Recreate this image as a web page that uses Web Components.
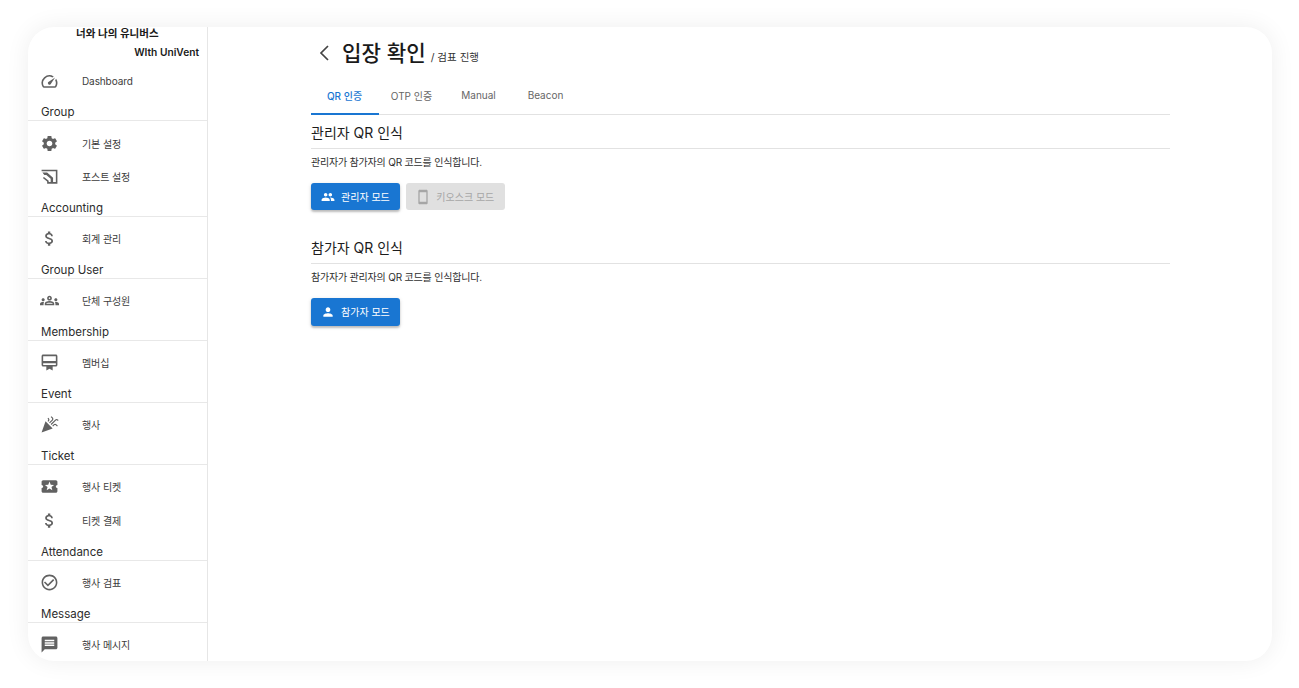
<!DOCTYPE html>
<html lang="ko">
<head>
<meta charset="utf-8">
<title>입장 확인</title>
<style>
  html, body { margin: 0; height: 100%; background: #fff; }
  body { font-family: Inter, "Noto Sans CJK KR", sans-serif; overflow: hidden; }
</style>
</head>
<body>
<app-shell>
  <side-nav slot="side"></side-nav>
  <checkin-page slot="main"></checkin-page>
</app-shell>

<script>
const ICONS = {
  speed: "M20.38 8.57l-1.23 1.85a8 8 0 0 1-.22 7.58H5.07A8 8 0 0 1 15.58 6.85l1.85-1.23A10 10 0 0 0 3.35 19a2 2 0 0 0 1.72 1h13.85a2 2 0 0 0 1.74-1 10 10 0 0 0-.27-10.44zm-9.79 6.84a2 2 0 0 0 2.83 0l5.66-8.49-8.49 5.66a2 2 0 0 0 0 2.83z",
  settings: "M19.14 12.94c.04-.3.06-.61.06-.94 0-.32-.02-.64-.07-.94l2.03-1.58c.18-.14.23-.41.12-.61l-1.92-3.32c-.12-.22-.37-.29-.59-.22l-2.39.96c-.5-.38-1.03-.7-1.62-.94l-.36-2.54c-.04-.24-.24-.41-.48-.41h-3.84c-.24 0-.43.17-.47.41l-.36 2.54c-.59.24-1.13.57-1.62.94l-2.39-.96c-.22-.08-.47 0-.59.22L2.74 8.87c-.12.21-.08.47.12.61l2.03 1.58c-.05.3-.09.63-.09.94s.02.64.07.94l-2.03 1.58c-.18.14-.23.41-.12.61l1.92 3.32c.12.22.37.29.59.22l2.39-.96c.5.38 1.03.7 1.62.94l.36 2.54c.05.24.24.41.48.41h3.84c.24 0 .44-.17.47-.41l.36-2.54c.59-.24 1.13-.56 1.62-.94l2.39.96c.22.08.47 0 .59-.22l1.92-3.32c.12-.22.07-.47-.12-.61l-2.01-1.58zM12 15.6c-1.98 0-3.6-1.62-3.6-3.6s1.62-3.6 3.6-3.6 3.6 1.62 3.6 3.6-1.62 3.6-3.6 3.6z",
  post: "M2 3.5h20V21H10v-2h10V5.5H2zM3 7h6l7.5 6.5V19h-3v-4.2L8 10H5.5zM5 12.5l6 5V21H9v-2.6l-5.4-4.5z",
  money: "M11.8 10.9c-2.27-.59-3-1.2-3-2.15 0-1.09 1.01-1.85 2.7-1.85 1.78 0 2.44.85 2.5 2.1h2.21c-.07-1.72-1.12-3.3-3.21-3.81V3h-3v2.16c-1.94.42-3.5 1.68-3.5 3.61 0 2.31 1.91 3.46 4.7 4.13 2.5.6 3 1.48 3 2.41 0 .69-.49 1.79-2.7 1.79-2.06 0-2.87-.92-2.98-2.1h-2.2c.12 2.19 1.76 3.42 3.68 3.83V21h3v-2.15c1.95-.37 3.5-1.5 3.5-3.55 0-2.84-2.43-3.81-4.7-4.4z",
  groups: "M4 13c1.1 0 2-.9 2-2s-.9-2-2-2-2 .9-2 2 .9 2 2 2zm1.13 1.1c-.37-.06-.74-.1-1.13-.1-.99 0-1.93.21-2.78.58C.48 14.9 0 15.62 0 16.43V18h4.5v-1.61c0-.83.23-1.61.63-2.29zM20 13c1.1 0 2-.9 2-2s-.9-2-2-2-2 .9-2 2 .9 2 2 2zm4 3.43c0-.81-.48-1.53-1.22-1.85-.85-.37-1.79-.58-2.78-.58-.39 0-.76.04-1.13.1.4.68.63 1.46.63 2.29V18H24v-1.57zm-7.76-2.78c-1.17-.52-2.61-.9-4.24-.9-1.63 0-3.07.39-4.24.9C6.68 14.13 6 15.21 6 16.39V18h12v-1.61c0-1.18-.68-2.26-1.76-2.74zM8 16c.09-.23.13-.39.91-.69.97-.38 1.99-.56 3.09-.56s2.12.18 3.09.56c.77.3.81.46.91.69H8zM12 12c1.66 0 3-1.34 3-3s-1.34-3-3-3-3 1.34-3 3 1.34 3 3 3zm0-4c.55 0 1 .45 1 1s-.45 1-1 1-1-.45-1-1 .45-1 1-1z",
  member: "M20 2H4c-1.11 0-2 .89-2 2v11c0 1.11.89 2 2 2h4v5l4-2 4 2v-5h4c1.11 0 2-.89 2-2V4c0-1.11-.89-2-2-2zm0 13H4v-2h16v2zm0-5H4V4h16v6z",
  party: "M2 22l14-5-9-9zM14.53 12.53l5.59-5.59c.49-.49 1.28-.49 1.77 0l.59.59 1.06-1.06-.59-.59c-1.07-1.07-2.82-1.07-3.89 0l-5.59 5.59 1.06 1.06zM10.06 6.88l-.59.59 1.06 1.06.59-.59c1.07-1.07 1.07-2.82 0-3.89l-.59-.59-1.06 1.06.59.59c.48.48.48 1.28 0 1.77zM17.06 11.88l-1.59 1.59 1.06 1.06 1.59-1.59c.49-.49 1.28-.49 1.77 0l1.61 1.61 1.06-1.06-1.61-1.61c-1.08-1.07-2.82-1.07-3.89 0zM15.06 5.88l-3.59 3.59 1.06 1.06 3.59-3.59c1.07-1.07 1.07-2.82 0-3.89l-1.59-1.59-1.06 1.06 1.59 1.59c.48.49.48 1.29 0 1.77z",
  ticket: "M20 12c0-1.1.9-2 2-2V6c0-1.1-.9-2-2-2H4c-1.1 0-1.99.9-1.99 2v4c1.1 0 1.99.9 1.99 2s-.89 2-2 2v4c0 1.1.9 2 2 2h16c1.1 0 2-.9 2-2v-4c-1.1 0-2-.9-2-2zm-4.42 4.8L12 14.5l-3.58 2.3 1.08-4.12-3.29-2.69 4.24-.25L12 5.8l1.54 3.95 4.24.25-3.29 2.69 1.09 4.11z",
  check: "M16.59 7.58L10 14.17l-3.59-3.58L5 12l5 5 8-8zM12 2C6.48 2 2 6.48 2 12s4.48 10 10 10 10-4.48 10-10S17.52 2 12 2zm0 18c-4.42 0-8-3.58-8-8s3.58-8 8-8 8 3.58 8 8-3.58 8-8 8z",
  message: "M20 2H4c-1.1 0-1.99.9-1.99 2L2 22l4-4h14c1.1 0 2-.9 2-2V4c0-1.1-.9-2-2-2zm-2 12H6v-2h12v2zm0-3H6V9h12v2zm0-3H6V6h12v2z",
  people: "M16 11c1.66 0 2.99-1.34 2.99-3S17.66 5 16 5c-1.66 0-3 1.34-3 3s1.34 3 3 3zm-8 0c1.66 0 2.99-1.34 2.99-3S9.66 5 8 5C6.34 5 5 6.34 5 8s1.34 3 3 3zm0 2c-2.33 0-7 1.17-7 3.5V19h14v-2.5c0-2.33-4.67-3.5-7-3.5zm8 0c-.29 0-.62.02-.97.05 1.16.84 1.97 1.97 1.97 3.45V19h6v-2.5c0-2.33-4.67-3.5-7-3.5z",
  person: "M12 12c2.21 0 4-1.79 4-4s-1.79-4-4-4-4 1.79-4 4 1.79 4 4 4zm0 2c-2.67 0-8 1.34-8 4v2h16v-2c0-2.66-5.33-4-8-4z",
  phone: "M17 1.01L7 1c-1.1 0-2 .9-2 2v18c0 1.1.9 2 2 2h10c1.1 0 2-.9 2-2V3c0-1.1-.9-1.99-2-1.99zM17 19H7V5h10v14z"
};

function iconSvg(name, size) {
  return `<svg class="i-${name}" width="${size}" height="${size}" viewBox="0 0 24 24" fill="currentColor" aria-hidden="true"><path d="${ICONS[name]}"/></svg>`;
}

class AppShell extends HTMLElement {
  constructor() {
    super();
    this.attachShadow({ mode: "open" }).innerHTML = `
      <style>
        :host { display: block; box-sizing: border-box; height: 688px; padding: 27px 27px 27px 28px; }
        .card {
          display: flex; height: 634px; background: #fff; border-radius: 26px; overflow: hidden;
          box-shadow: 0 0 24px rgba(0, 0, 0, 0.07);
        }
        ::slotted([slot="side"]) { flex: 0 0 180px; }
        ::slotted([slot="main"]) { flex: 1; min-width: 0; }
      </style>
      <div class="card">
        <slot name="side"></slot>
        <slot name="main"></slot>
      </div>
    `;
  }
}

class NavItem extends HTMLElement {
  constructor() {
    super();
    const icon = this.getAttribute("icon");
    this.attachShadow({ mode: "open" }).innerHTML = `
      <style>
        :host { display: flex; align-items: center; height: 33.5px; color: #3c3c3c; }
        .icon { flex: 0 0 42px; display: flex; justify-content: center; color: #616161; margin-right: 12px; }
        .label { font-size: 10px; letter-spacing: -0.1px; }
      </style>
      <span class="icon">${iconSvg(icon, 19)}</span>
      <span class="label"><slot></slot></span>
    `;
  }
}

class NavGroup extends HTMLElement {
  constructor() {
    super();
    this.attachShadow({ mode: "open" }).innerHTML = `
      <style>
        :host { display: block; }
        .title {
          box-sizing: border-box; height: 23px; padding: 6px 0 0 13px; margin-bottom: 5.5px;
          font-size: 11.5px; line-height: 17px; color: #2c2c2c; border-bottom: 1px solid #e8e8e8;
        }
      </style>
      <div class="title">${this.getAttribute("title")}</div>
      <slot></slot>
    `;
  }
}

class SideNav extends HTMLElement {
  constructor() {
    super();
    const groups = [
      ["Group", [["settings", "기본 설정"], ["post", "포스트 설정"]]],
      ["Accounting", [["money", "회계 관리"]]],
      ["Group User", [["groups", "단체 구성원"]]],
      ["Membership", [["member", "멤버십"]]],
      ["Event", [["party", "행사"]]],
      ["Ticket", [["ticket", "행사 티켓"], ["money", "티켓 결제"]]],
      ["Attendance", [["check", "행사 검표"]]],
      ["Message", [["message", "행사 메시지"]]]
    ];
    const body = groups.map(([title, items]) => `
      <nav-group title="${title}">
        ${items.map(([icon, label]) => `<nav-item icon="${icon}">${label}</nav-item>`).join("")}
      </nav-group>`).join("");
    this.attachShadow({ mode: "open" }).innerHTML = `
      <style>
        :host { display: block; box-sizing: border-box; border-right: 1px solid #e6e6e6; overflow: hidden; }
        .brand { height: 37.6px; padding: 0 8px 0 0; font-size: 10.5px; font-weight: 600; color: #1a1a1a; }
        .brand div { height: 18px; line-height: 14px; }
        .brand .ko { padding-left: 48px; }
        .brand .en { text-align: right; font-size: 10.2px; }
        nav-group[title="Ticket"] nav-item { height: 33.8px; }
      </style>
      <div class="brand">
        <div class="ko">너와 나의 유니버스</div>
        <div class="en">WIth UniVent</div>
      </div>
      <nav-item icon="speed">Dashboard</nav-item>
      ${body}
    `;
  }
}

class TabBar extends HTMLElement {
  constructor() {
    super();
    const tabs = ["QR 인증", "OTP 인증", "Manual", "Beacon"];
    this.attachShadow({ mode: "open" }).innerHTML = `
      <style>
        :host { display: flex; height: 38px; border-bottom: 1px solid #e2e2e2; }
        .tab {
          position: relative; width: 67px; display: flex; align-items: center; justify-content: center;
          font-size: 10px; color: #666;
        }
        .tab.on { color: #1976d2; font-weight: 500; }
        .tab.on::after { content: ""; position: absolute; left: 0; right: -1px; bottom: -1px; height: 2px; background: #1976d2; }
      </style>
      ${tabs.map((t, i) => `<div class="tab${i === 0 ? " on" : ""}">${t}</div>`).join("")}
    `;
  }
}

class ModeButton extends HTMLElement {
  constructor() {
    super();
    const icon = this.getAttribute("icon");
    const size = icon === "phone" ? 16 : 14;
    this.attachShadow({ mode: "open" }).innerHTML = `
      <style>
        :host {
          display: inline-flex; align-items: center; box-sizing: border-box; height: 27.4px; padding: 0 10.5px 0 10px;
          gap: 6px; border-radius: 3px; font-size: 10px; background: #1976d2; color: #fff;
          box-shadow: 0 2px 2px rgba(0,0,0,.2), 0 1px 4px rgba(0,0,0,.12);
        }
        :host([disabled]) { background: #e0e0e0; color: #a6a6a6; box-shadow: none; }
        svg { display: block; }
        .i-phone { margin: 0 -1px 0 -1px; }
      </style>
      ${iconSvg(icon, size)}<span><slot></slot></span>
    `;
  }
}

class QrSection extends HTMLElement {
  constructor() {
    super();
    this.attachShadow({ mode: "open" }).innerHTML = `
      <style>
        :host { display: block; }
        h2 {
          margin: 0; height: 25px; box-sizing: border-box; font-size: 14px; font-weight: 400; line-height: 16px;
          color: #1c1c1c; border-bottom: 1px solid #e2e2e2; padding-top: 1px;
        }
        p { margin: 6px 0 14px; font-size: 10px; line-height: 14px; letter-spacing: -0.2px; color: #2e2e2e; }
        .actions { display: flex; gap: 6px; }
      </style>
      <h2>${this.getAttribute("heading")}</h2>
      <p>${this.getAttribute("text")}</p>
      <div class="actions"><slot></slot></div>
    `;
  }
}

class CheckinPage extends HTMLElement {
  constructor() {
    super();
    this.attachShadow({ mode: "open" }).innerHTML = `
      <style>
        :host { display: block; box-sizing: border-box; padding: 0 102px 0 103px; }
        header { display: flex; align-items: baseline; height: 49px; padding: 11px 0 0 0; box-sizing: border-box; }
        .back { align-self: flex-start; margin: 6px 0 0 5px; width: 16px; height: 18px; color: #444; }
        h1 { margin: 0 0 0 10px; font-size: 21.2px; line-height: 30px; font-weight: 500; color: #1a1a1a; }
        .sub { margin-left: 5px; font-size: 10.5px; color: #333; }
        tab-bar { margin-bottom: 9px; }
        qr-section + qr-section { margin-top: 28.8px; }
      </style>
      <header>
        <svg class="back" viewBox="0 0 16 18" fill="none" stroke="currentColor" stroke-width="1.7"><path d="M12 2 L5 9 L12 16"/></svg>
        <h1>입장 확인</h1>
        <span class="sub">/ 검표 진행</span>
      </header>
      <tab-bar></tab-bar>
      <qr-section heading="관리자 QR 인식" text="관리자가 참가자의 QR 코드를 인식합니다.">
        <mode-button icon="people">관리자 모드</mode-button>
        <mode-button icon="phone" disabled>키오스크 모드</mode-button>
      </qr-section>
      <qr-section heading="참가자 QR 인식" text="참가자가 관리자의 QR 코드를 인식합니다.">
        <mode-button icon="person">참가자 모드</mode-button>
      </qr-section>
    `;
  }
}

customElements.define("nav-item", NavItem);
customElements.define("nav-group", NavGroup);
customElements.define("side-nav", SideNav);
customElements.define("tab-bar", TabBar);
customElements.define("mode-button", ModeButton);
customElements.define("qr-section", QrSection);
customElements.define("checkin-page", CheckinPage);
customElements.define("app-shell", AppShell);
</script>
</body>
</html>
